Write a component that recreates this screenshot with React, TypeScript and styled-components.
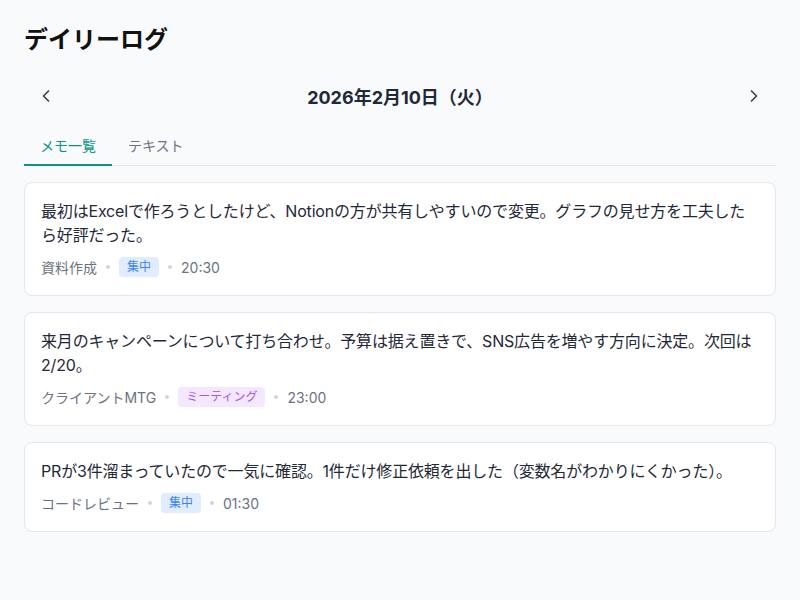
import React, { useState } from "react";
import styled, { createGlobalStyle } from "styled-components";
import { ChevronLeft, ChevronRight } from "lucide-react";

const GlobalStyle = createGlobalStyle`
  body {
    margin: 0;
    background: #f8fafc;
    font-family: "Inter", "Noto Sans CJK JP", sans-serif;
    color: #1f2937;
  }
`;

interface Memo {
  id: number;
  body: string;
  category: string;
  tag: string;
  tone: "blue" | "purple";
  time: string;
}

const memos: Memo[] = [
  {
    id: 1,
    body: "最初はExcelで作ろうとしたけど、Notionの方が共有しやすいので変更。グラフの見せ方を工夫したら好評だった。",
    category: "資料作成",
    tag: "集中",
    tone: "blue",
    time: "20:30",
  },
  {
    id: 2,
    body: "来月のキャンペーンについて打ち合わせ。予算は据え置きで、SNS広告を増やす方向に決定。次回は2/20。",
    category: "クライアントMTG",
    tag: "ミーティング",
    tone: "purple",
    time: "23:00",
  },
  {
    id: 3,
    body: "PRが3件溜まっていたので一気に確認。1件だけ修正依頼を出した（変数名がわかりにくかった）。",
    category: "コードレビュー",
    tag: "集中",
    tone: "blue",
    time: "01:30",
  },
];

const tones = {
  blue: { bg: "#e0ecff", fg: "#3b82f6" },
  purple: { bg: "#f3e8ff", fg: "#a855f7" },
};

export default function App() {
  const [tab, setTab] = useState<"list" | "text">("list");

  return (
    <>
      <GlobalStyle />
      <Page>
        <Title>デイリーログ</Title>
        <DateNav>
          <NavButton aria-label="前の日">
            <ChevronLeft size={20} strokeWidth={2} />
          </NavButton>
          <DateLabel>2026年2月10日（火）</DateLabel>
          <NavButton aria-label="次の日">
            <ChevronRight size={20} strokeWidth={2} />
          </NavButton>
        </DateNav>
        <Tabs>
          <Tab $active={tab === "list"} onClick={() => setTab("list")}>
            メモ一覧
          </Tab>
          <Tab $active={tab === "text"} onClick={() => setTab("text")}>
            テキスト
          </Tab>
        </Tabs>
        <MemoList>
          {memos.map((m) => (
            <MemoCard key={m.id}>
              <MemoBody>{m.body}</MemoBody>
              <Meta>
                <span>{m.category}</span>
                <Dot />
                <Badge $tone={m.tone}>{m.tag}</Badge>
                <Dot />
                <span>{m.time}</span>
              </Meta>
            </MemoCard>
          ))}
        </MemoList>
      </Page>
    </>
  );
}

const Page = styled.div`
  padding: 24px;
`;

const Title = styled.h1`
  margin: 0;
  font-size: 24px;
  line-height: 32px;
  font-weight: 700;
  color: #111111;
`;

const DateNav = styled.div`
  display: flex;
  align-items: center;
  justify-content: space-between;
  margin-top: 22px;
  padding: 0 4px;
`;

const NavButton = styled.button`
  width: 36px;
  height: 36px;
  display: flex;
  align-items: center;
  justify-content: center;
  border: none;
  background: transparent;
  color: #374151;
  padding: 0;
  cursor: pointer;
`;

const DateLabel = styled.div`
  font-size: 18px;
  font-weight: 700;
  color: #1f2937;
`;

const Tabs = styled.div`
  display: flex;
  margin-top: 12px;
  border-bottom: 1px solid #e5e7eb;
`;

const Tab = styled.button<{ $active: boolean }>`
  border: none;
  background: transparent;
  font-family: inherit;
  font-size: 14px;
  line-height: 20px;
  padding: 10px 16px 8px;
  margin-bottom: -1px;
  color: ${(p) => (p.$active ? "#0d9488" : "#6b7280")};
  border-bottom: 2px solid ${(p) => (p.$active ? "#0d9488" : "transparent")};
  cursor: pointer;
`;

const MemoList = styled.div`
  display: flex;
  flex-direction: column;
  gap: 16px;
  margin-top: 16px;
`;

const MemoCard = styled.div`
  background: #ffffff;
  border: 1px solid #e5e7eb;
  border-radius: 8px;
  padding: 16px;
`;

const MemoBody = styled.p`
  margin: 0;
  font-size: 16px;
  line-height: 24px;
  letter-spacing: -0.18px;
  color: #1f2937;
`;

const Meta = styled.div`
  display: flex;
  align-items: center;
  gap: 9px;
  margin-top: 8px;
  height: 24px;
  font-size: 14px;
  color: #6b7280;
`;

const Dot = styled.span`
  width: 4px;
  height: 4px;
  border-radius: 50%;
  background: #d1d5db;
`;

const Badge = styled.span<{ $tone: "blue" | "purple" }>`
  font-size: 12px;
  line-height: 20px;
  padding: 0 8px;
  border-radius: 4px;
  background: ${(p) => tones[p.$tone].bg};
  color: ${(p) => tones[p.$tone].fg};
`;
